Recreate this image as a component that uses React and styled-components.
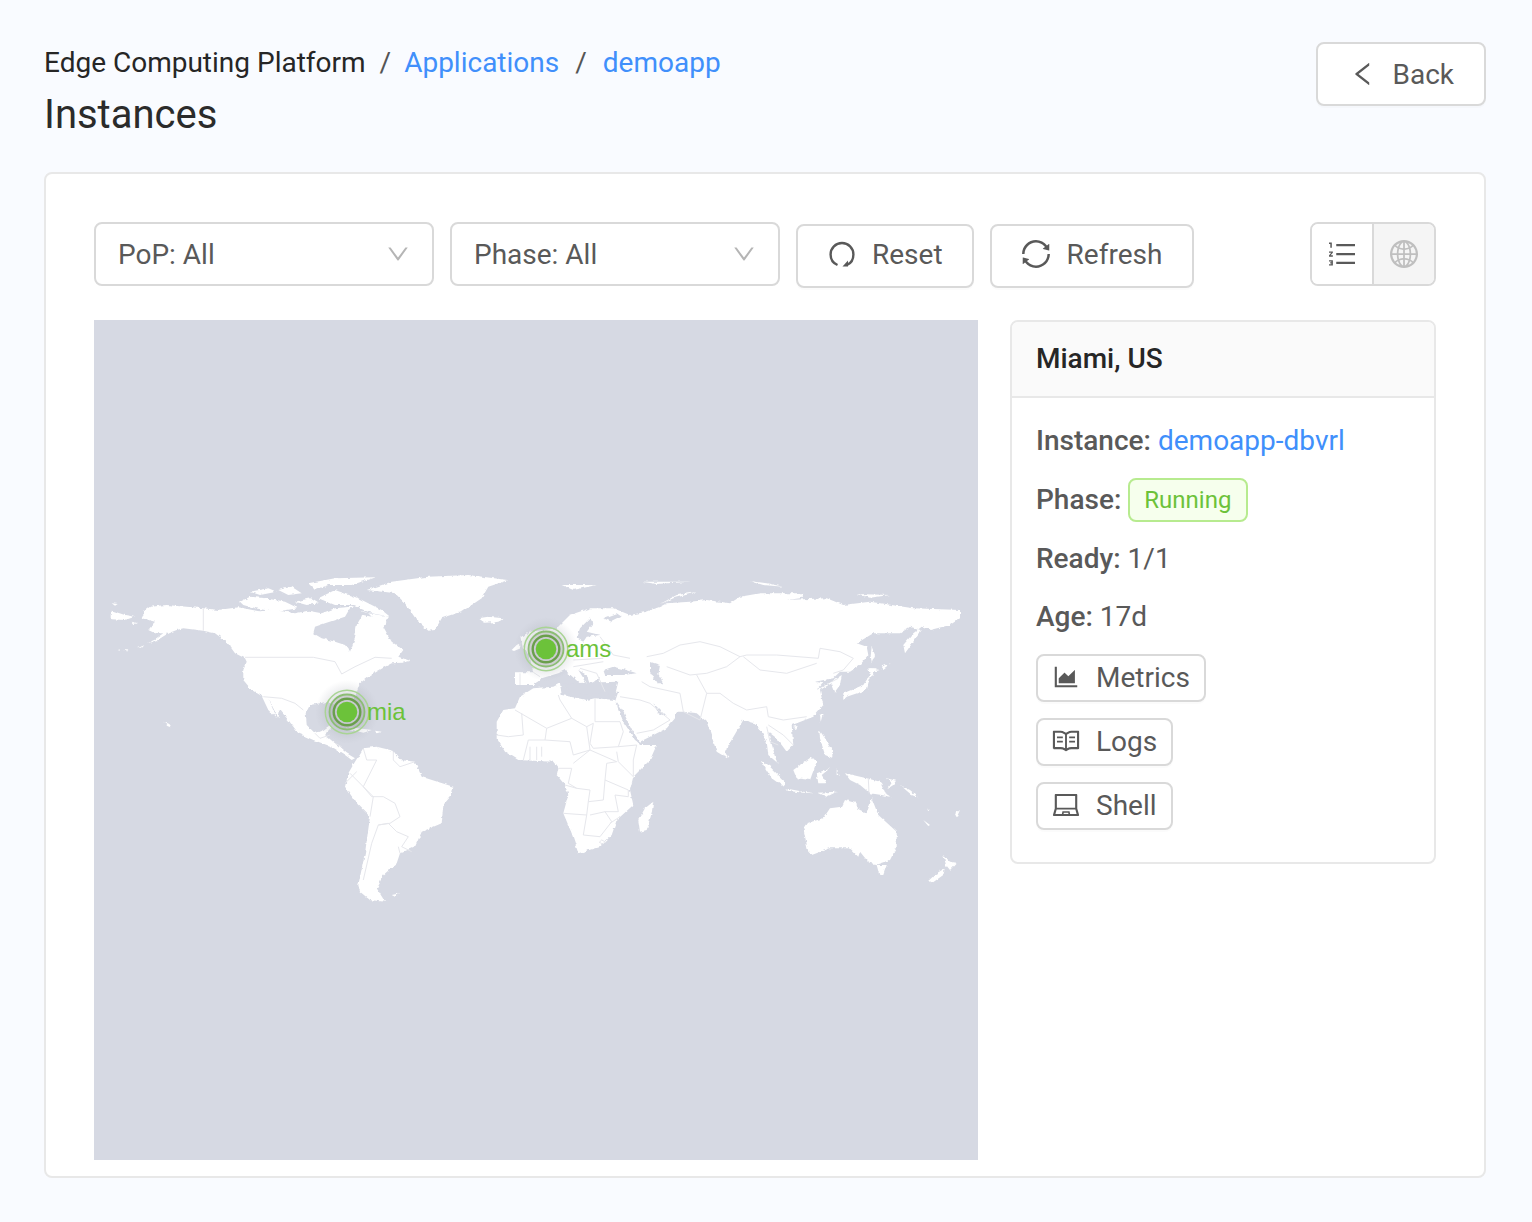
import React from "react";
import styled, { createGlobalStyle } from "styled-components";
import {
  AiOutlineAreaChart,
  AiOutlineDown,
  AiOutlineGlobal,
  AiOutlineLaptop,
  AiOutlineLeft,
  AiOutlineOrderedList,
  AiOutlineRead,
  AiOutlineSync,
} from "react-icons/ai";

const GlobalStyle = createGlobalStyle`
  html, body {
    margin: 0;
    padding: 0;
    background: #f9fbff;
    font-family: Roboto, "Liberation Sans", sans-serif;
  }
`;

const Page = styled.div`
  width: 1532px;
  height: 1222px;
  box-sizing: border-box;
  padding: 42px 46px 44px 44px;
  display: flex;
  flex-direction: column;
`;

const PageHeader = styled.div`
  display: flex;
  justify-content: space-between;
  align-items: flex-start;
  height: 130px;
`;

const Breadcrumb = styled.div`
  display: flex;
  padding-top: 1px;
  font-size: 28px;
  line-height: 40px;
  color: #262626;
`;

const Crumb = styled.span`
  color: ${(props) => (props.$link ? "#408ffb" : "#262626")};
`;

const Slash = styled.span`
  margin: 0 ${(props) => props.$right || 16}px 0 ${(props) => props.$left || 16}px;
  color: #555;
`;

const Title = styled.h1`
  margin: 6px 0 0;
  font-size: 40px;
  line-height: 52px;
  font-weight: 400;
  color: #2b2b2b;
`;

const Button = styled.div`
  display: inline-flex;
  align-items: center;
  box-sizing: border-box;
  height: ${(props) => props.$height || 64}px;
  padding: 0 ${(props) => props.$pad || 30}px;
  gap: ${(props) => props.$gap || 16}px;
  border: 2px solid #d9d9d9;
  border-radius: 8px;
  background: #fff;
  color: #595959;
  font-size: 28px;
  box-shadow: 0 2px 0 rgba(0, 0, 0, 0.015);
  svg {
    flex: none;
  }
`;

const Card = styled.div`
  flex: 1;
  box-sizing: border-box;
  padding: 48px 48px 16px;
  background: #fff;
  border: 2px solid #e8e8e8;
  border-radius: 8px;
  display: flex;
  flex-direction: column;
`;

const Toolbar = styled.div`
  display: flex;
  align-items: flex-start;
  gap: 16px;
  height: 98px;
`;

const Select = styled.div`
  display: flex;
  align-items: center;
  justify-content: space-between;
  box-sizing: border-box;
  width: ${(props) => props.$width}px;
  height: 64px;
  padding: 0 21px 0 22px;
  border: 2px solid #d9d9d9;
  border-radius: 8px;
  color: #595959;
  font-size: 28px;
  svg {
    color: #b5b5b5;
  }
`;

const ToolButton = styled(Button)`
  margin-top: 2px;
  padding-bottom: 4px;
  padding-right: ${(props) => props.$right || 29}px;
`;

const SyncIcon = styled(AiOutlineSync)`
  margin-left: -3px;
`;

const ViewToggle = styled.div`
  margin-left: auto;
  display: flex;
  box-sizing: border-box;
  height: 64px;
  border: 2px solid #d9d9d9;
  border-radius: 8px;
  overflow: hidden;
`;

const ToggleItem = styled.div`
  width: 60px;
  display: flex;
  align-items: center;
  justify-content: center;
  color: ${(props) => (props.$active ? "#bfbfbf" : "#595959")};
  background: ${(props) => (props.$active ? "#f5f5f5" : "#fff")};
  border-left: ${(props) => (props.$active ? "2px solid #d9d9d9" : "none")};
`;

const Content = styled.div`
  display: flex;
  align-items: flex-start;
  gap: 32px;
`;

const MapBox = styled.div`
  position: relative;
  width: 884px;
  height: 840px;
  background: #d6d9e3;
  overflow: hidden;
  > svg {
    display: block;
  }
`;

const Pin = styled.div`
  position: absolute;
  left: ${(props) => props.$x}px;
  top: ${(props) => props.$y}px;
  width: 0;
  height: 0;
`;

const PinRings = styled.svg`
  position: absolute;
  left: -32px;
  top: -32px;
  width: 64px;
  height: 64px;
`;

const PinLabel = styled.span`
  position: absolute;
  left: 20px;
  top: -15px;
  font-family: "Liberation Sans", Arial, sans-serif;
  font-size: 24px;
  line-height: 30px;
  color: #6cc23a;
`;

const Panel = styled.div`
  flex: 1;
  box-sizing: border-box;
  border: 2px solid #e8e8e8;
  border-radius: 8px;
`;

const PanelHead = styled.div`
  height: 76px;
  box-sizing: border-box;
  padding: 0 24px 2px;
  display: flex;
  align-items: center;
  background: #fafafa;
  border-bottom: 2px solid #e8e8e8;
  border-radius: 6px 6px 0 0;
  font-size: 28px;
  font-weight: 500;
  color: #262626;
`;

const PanelBody = styled.div`
  padding: 20px 24px 32px;
  display: flex;
  flex-direction: column;
  align-items: flex-start;
`;

const Field = styled.div`
  display: flex;
  align-items: center;
  height: 44px;
  margin-bottom: ${(props) => props.$gap || 15}px;
  font-size: 28px;
  color: #595959;
`;

const FieldName = styled.span`
  font-weight: 500;
  margin-right: 7px;
`;

const FieldLink = styled.span`
  color: #408ffb;
`;

const Tag = styled.span`
  box-sizing: border-box;
  height: 44px;
  margin-top: 1px;
  line-height: 40px;
  padding: 0 15px 0 14px;
  font-size: 24px;
  color: #6cc23a;
  background: #f6ffed;
  border: 2px solid #b7eb8f;
  border-radius: 8px;
`;

const ActionButton = styled(Button)`
  margin-bottom: 16px;
  padding-right: 14px;
  padding-bottom: 2px;
  &:last-child {
    margin-bottom: 0;
  }
`;

// map data is written in crop coordinates, seg() brings it back to page coordinates
const seg = (ox, oy, s) =>
  s
    .trim()
    .split(/\s+/)
    .map((p) => {
      const [x, y] = p.split(",").map(Number);
      return `${(ox + x / 3).toFixed(1)} ${(oy + y / 3).toFixed(1)}`;
    });
const poly = (...segs) => "M" + segs.flat().join("L") + "Z";
const line = (...segs) => "M" + segs.flat().join("L");

const WEST = (s) => seg(105, 570, s);
const NA = (s) => seg(235, 570, s);
const SA = (s) => seg(100, 560, s);
const EU = (s) => seg(490, 595, s);
const OLD = (s) => seg(490, 560, s);
const AS = (s) => seg(700, 575, s);
const OC = (s) => seg(740, 740, s);
const AF = (s) => seg(490, 680, s);

const LAND = [
  poly(
    WEST("115,125 135,110 185,105 295,115 340,120 400,112 470,125 530,135"),
    NA("60,125 120,120 180,130 220,122 260,130 300,115 350,110 400,130 465,140 445,170 470,215 505,240 490,260 525,272 500,278 470,280 450,290 400,320 375,340 362,375 350,395 345,430 330,425 280,395 225,405 212,430 215,465 240,490 265,480 285,465 290,475 270,495 300,520 335,550 360,565 350,570 330,555 290,530 235,510 190,490 160,450 135,420"),
    WEST("520,445 490,385 515,445 490,420 470,378 440,360 415,330 415,300 425,275 420,265 390,250 365,215 330,190 295,182 235,175 215,180 190,190 150,215 130,222 175,190 150,190 130,180 150,155 110,145 115,135")
  ),
  poly(WEST("20,122 60,135 90,140 60,150 20,148")),
  poly(WEST("20,100 38,102 30,107")),
  poly(WEST("80,155 100,160 85,162")),
  poly(WEST("97,233 115,226 108,233")),
  poly(WEST("38,240 48,238 46,243")),
  poly(WEST("55,238 70,238 66,242")),
  poly(WEST("175,455 190,462 197,472 187,468")),
  poly(NA("15,95 45,80 90,85 150,95 190,115 120,125 60,115 25,105")),
  poly(NA("45,65 100,55 125,65 75,75")),
  poly(NA("130,60 170,50 200,70 160,75")),
  poly(NA("180,95 225,85 250,100 215,105")),
  poly(NA("220,40 300,25 420,22 350,45 280,45 240,60")),
  poly(NA("250,85 300,60 370,85 440,120 465,140 410,130 350,105 300,105")),
  poly(NA("395,60 470,35 580,20 700,15 820,30 760,50 740,85 680,125 620,145 600,180 580,182 545,150 510,100 480,70")),
  poly(NA("730,145 760,140 805,145 790,155 750,158")),
  poly(NA("330,470 370,475 410,480 385,488 345,478")),
  poly(NA("420,482 440,485 425,490")),
  poly(SA("790,565 830,560 880,572 900,600 945,605 965,650 1060,680 1055,705 1030,735 1025,790 965,815 945,860 900,880 890,910 850,945 830,985 855,1025 810,1020 780,995 775,975 795,880 810,770 770,730 735,680 745,640 765,605")),
  poly(SA("875,1005 900,1000 885,1010")),
  poly(EU("65,165 80,150 90,145 92,160 72,168")),
  poly(EU("92,130 110,115 120,135 125,165 100,165")),
  poly(
    EU("120,110 200,100 240,60 300,40 370,40 420,60 470,50 510,35 530,25 600,20 650,15 720,25"),
    AS("120,65 180,55 310,55 300,70 260,75 380,70 430,90 510,80 640,100 780,105 780,130 750,150 690,165 665,155 640,175 610,210 615,235 640,200 665,165 630,155 600,175 520,175 470,205 500,215 505,240 480,270 450,290 420,290 400,310 345,320 370,325 350,345 395,320 425,300 420,330 405,350 395,325 360,345 370,390 340,425 290,445 275,450 280,510 260,530 230,490 205,470 230,560 240,570 205,540 200,500 185,470 165,445 130,435 80,520 75,545 50,530 20,440"),
    EU("620,355 580,350 555,350 555,370 530,400 450,440 400,370 375,320 385,290 345,290 325,260 330,245 300,270 290,240 265,225 290,265 275,270 225,225 205,235 155,250 130,270 75,270 75,232 130,232 120,190 100,150")
  ),
  poly(AF("20,125 40,90 75,85 90,50 130,25 190,20 210,10 215,45 290,60 315,55 375,60 400,125 430,170 450,195 500,195 480,240 430,290 420,330 430,375 380,420 365,465 330,500 265,520 245,460 220,400 235,345 225,315 200,285 205,265 190,245 85,240 45,215 20,175")),
  poly(AF("490,365 485,400 470,450 450,455 445,420 465,385")),
  poly(OC("190,265 200,250 250,235 270,205 305,200 315,180 350,190 350,205 380,220 395,175 415,225 470,275 470,320 450,360 405,375 380,360 360,335 355,350 330,325 270,325 215,345 205,335")),
  poly(OC("410,375 440,375 430,405 418,405")),
  poly(OC("610,345 630,365 650,368 630,390 618,375")),
  poly(OC("615,385 610,405 575,430 568,420 590,400")),
  poly(OC("315,100 380,115 420,125 435,160 455,172 425,165 390,160 360,135 330,120")),
  poly(OC("62,62 90,80 135,125 130,140 95,115")),
  poly(OC("135,145 190,155 225,160 190,158 140,152")),
  poly(OC("235,158 290,155 260,170")),
  poly(OC("160,90 215,50 230,65 210,120 170,115")),
  poly(OC("230,100 270,85 245,105 260,130 235,130")),
  poly(OC("290,85 300,110 290,105")),
  poly(OC("480,135 510,150 540,175 515,165")),
  poly(OC("550,240 570,255 565,258")),
  poly(OC("565,205 572,215 568,216")),
  poly(OC("645,222 660,210 650,232")),
  poly(OC("440,115 468,122 460,135 445,145 455,128")),
  poly(AS("358,465 375,490 400,530 400,550 375,540 360,490")),
  poly(AS("430,355 490,330 510,300 505,280 530,280 510,310 500,345 440,365 430,375")),
  poly(AS("510,280 540,285 515,292")),
  poly(AS("515,215 525,240 515,265 512,240")),
  poly(AS("545,275 572,265 550,282")),
  poly(AS("360,420 368,418 362,440")),
  poly(AS("280,455 292,452 285,465")),
  poly(AS("72,530 85,545 78,550")),
  poly(AS("150,18 200,25 250,35 190,30")),
  poly(AS("470,57 570,60 510,68")),
  poly(OLD("505,135 560,105 625,95 550,115")),
  poly(OLD("215,75 320,75 250,90")),
  poly(OLD("455,65 600,65 500,72")),
  poly(OLD("0,175 40,175 10,190")),
];

const WATER = [
  poly(NA("235,190 240,170 270,160 300,150 330,140 345,115 375,110 385,130 365,165 360,205 345,245 330,225 300,215 260,205")),
  poly(NA("345,115 400,130 410,140 385,135")),
  poly(EU("260,130 270,100 300,70 310,85 290,110 330,120 290,125 280,140")),
  poly(EU("340,70 380,55 395,65 365,80")),
  poly(EU("340,225 370,215 410,225 440,235 400,240 370,240 345,240")),
  poly(EU("480,200 510,210 505,240 520,265 500,265 480,230")),
  poly(EU("490,325 510,345 530,365 505,355")),
  poly(AF("380,65 400,95 425,150 448,188 435,180 405,130 385,90")),
  poly(AF("215,10 235,10 385,5 375,45 315,40 290,45 240,35")),
];

const BORDERS = [
  line(WEST("295,115 295,182")),
  line(NA("30,262 235,262 300,275 320,312 360,290 420,262 470,265")),
  line(NA("85,380 140,385 180,400 205,420")),
  line(NA("240,490 255,505 285,495")),
  line(NA("300,520 320,530")),
  line(SA("790,565 800,600 830,600 815,630 790,680 815,710 850,710 885,730 900,770 870,790 835,795")),
  line(SA("810,770 820,710 790,680 750,640")),
  line(SA("880,575 880,600 900,620 945,605")),
  line(SA("835,795 815,850 790,960")),
  line(SA("835,795 865,790 890,815 925,830 905,860 935,875")),
  line(SA("900,880 895,860")),
  line(SA("735,670 770,635")),
  line(AF("95,100 100,165 55,170 20,165")),
  line(AF("75,90 170,145 165,180 115,180 100,240")),
  line(AF("170,145 245,115 210,60 205,45")),
  line(AF("245,115 290,140 300,210 250,225 240,185 165,180")),
  line(AF("315,55 315,125 390,125 400,155 385,200 310,205 300,190 310,130 290,140")),
  line(AF("140,240 140,200")),
  line(AF("120,240 120,200")),
  line(AF("155,230 155,200")),
  line(AF("385,200 440,195 430,240 430,290 385,245 380,215")),
  line(AF("250,250 300,210 380,245 350,250 345,300 340,360 295,365 300,330 260,325 235,310 245,265 205,265")),
  line(AF("225,315 260,325")),
  line(AF("220,400 290,405 295,365")),
  line(AF("290,405 280,465 330,470 365,425 345,395 300,405")),
  line(AF("345,300 415,330 415,350 375,345 385,395 345,395")),
  line(AF("360,430 390,410")),
  line(AF("328,487 335,480 345,485 338,492 328,487")),
  line(EU("90,235 90,270")),
  line(EU("130,232 150,245")),
  line(EU("330,125 370,180 420,190")),
  line(EU("250,215 340,200")),
  line(EU("270,220 320,235")),
  line(EU("250,195 340,190")),
  line(EU("320,235 345,290")),
  line(OLD("470,290 520,280 570,255 630,245 690,260 750,290 770,285 860,285 985,295 990,265 1050,275 1090,295 1060,330 1030,340")),
  line(OLD("760,290 810,330 890,340 980,310")),
  line(OLD("530,320 600,345 650,340 710,320 750,290")),
  line(OLD("455,365 480,380 570,400 580,455 630,480 650,400 690,400 730,430 770,450 830,440 835,470 880,480 950,470")),
  line(OLD("390,410 450,420 480,430 540,480")),
  line(OLD("440,520 490,510 540,480")),
  line(OLD("650,400 620,345")),
  line(AS("205,450 250,480 280,510")),
  line(AS("200,455 210,500 235,510")),
  line(AS("395,320 415,310")),
  line(OC("385,115 387,160")),
];

const Rings = ({ id }) => (
  <PinRings viewBox="0 0 64 64">
    <defs>
      <radialGradient id={id}>
        <stop offset="55%" stopColor="#9a9ea9" stopOpacity="0.28" />
        <stop offset="100%" stopColor="#b0b3bd" stopOpacity="0" />
      </radialGradient>
    </defs>
    <circle cx="32" cy="32" r="32" fill={`url(#${id})`} />
    <circle cx="32" cy="32" r="21.7" fill="none" stroke="#a9d494" strokeWidth="1.5" />
    <circle cx="32" cy="32" r="17.5" fill="#a6aaa8" fillOpacity="0.35" stroke="#8cbd74" strokeWidth="1.8" />
    <circle cx="32" cy="32" r="13.3" fill="none" stroke="#6a9f4c" strokeWidth="2.4" />
    <circle cx="32" cy="32" r="11.6" fill="#c9cbd1" />
    <circle cx="32" cy="32" r="10.3" fill="#6cc23a" />
  </PinRings>
);

const WorldMap = () => (
  <MapBox>
    <svg width="884" height="840" viewBox="94 320 884 840">
      <defs>
        <filter id="coast" filterUnits="userSpaceOnUse" x="94" y="320" width="884" height="840">
          <feTurbulence type="fractalNoise" baseFrequency="0.22" numOctaves="2" seed="4" />
          <feDisplacementMap in="SourceGraphic" scale="3.5" xChannelSelector="R" yChannelSelector="G" />
          <feGaussianBlur stdDeviation="0.3" />
        </filter>
      </defs>
      <g filter="url(#coast)">
        {LAND.map((d) => (
          <path key={d} d={d} fill="#fff" />
        ))}
        {WATER.map((d) => (
          <path key={d} d={d} fill="#d6d9e3" />
        ))}
      </g>
      {BORDERS.map((d) => (
        <path key={d} d={d} fill="none" stroke="#e6e7ec" strokeWidth="1" />
      ))}
    </svg>
    <Pin $x={253} $y={392}>
      <Rings id="glowMia" />
      <PinLabel>mia</PinLabel>
    </Pin>
    <Pin $x={452} $y={329}>
      <Rings id="glowAms" />
      <PinLabel>ams</PinLabel>
    </Pin>
  </MapBox>
);

const ResetIcon = () => (
  <svg width="28" height="28" viewBox="0 0 28 28" fill="none" stroke="#595959" strokeWidth="2.4">
    <path d="M9.5 25C5.4 23.2 2.6 19 2.6 14.4C2.6 8 7.6 3 14 3S25.4 8 25.4 14.4C25.4 19 22.8 23.2 19 25" />
    <path d="M14.5 26.5L20 26.5L20 20.5Z" fill="#595959" stroke="none" />
  </svg>
);

const App = () => (
  <Page>
    <GlobalStyle />
    <PageHeader>
      <div>
        <Breadcrumb>
          <Crumb>Edge Computing Platform</Crumb>
          <Slash $left={14} $right={13}>/</Slash>
          <Crumb $link>Applications</Crumb>
          <Slash>/</Slash>
          <Crumb $link>demoapp</Crumb>
        </Breadcrumb>
        <Title>Instances</Title>
      </div>
      <Button $gap={14}>
        <AiOutlineLeft size={30} />
        Back
      </Button>
    </PageHeader>

    <Card>
      <Toolbar>
        <Select $width={340}>
          PoP: All
          <AiOutlineDown size={26} />
        </Select>
        <Select $width={330}>
          Phase: All
          <AiOutlineDown size={26} />
        </Select>
        <ToolButton $height={64} $gap={16}>
          <ResetIcon />
          Reset
        </ToolButton>
        <ToolButton $height={64} $gap={14} $right={30}>
          <SyncIcon size={34} />
          Refresh
        </ToolButton>
        <ViewToggle>
          <ToggleItem>
            <AiOutlineOrderedList size={32} />
          </ToggleItem>
          <ToggleItem $active>
            <AiOutlineGlobal size={32} />
          </ToggleItem>
        </ViewToggle>
      </Toolbar>

      <Content>
        <WorldMap />
        <Panel>
          <PanelHead>Miami, US</PanelHead>
          <PanelBody>
            <Field>
              <FieldName>Instance:</FieldName>
              <FieldLink>demoapp-dbvrl</FieldLink>
            </Field>
            <Field>
              <FieldName>Phase:</FieldName>
              <Tag>Running</Tag>
            </Field>
            <Field $gap={14}>
              <FieldName>Ready:</FieldName>
              1/1
            </Field>
            <Field $gap={16}>
              <FieldName>Age:</FieldName>
              17d
            </Field>
            <ActionButton $height={48} $pad={13} $gap={15}>
              <AiOutlineAreaChart size={30} />
              Metrics
            </ActionButton>
            <ActionButton $height={48} $pad={13} $gap={15}>
              <AiOutlineRead size={30} />
              Logs
            </ActionButton>
            <ActionButton $height={48} $pad={13} $gap={15}>
              <AiOutlineLaptop size={30} />
              Shell
            </ActionButton>
          </PanelBody>
        </Panel>
      </Content>
    </Card>
  </Page>
);

export default App;
